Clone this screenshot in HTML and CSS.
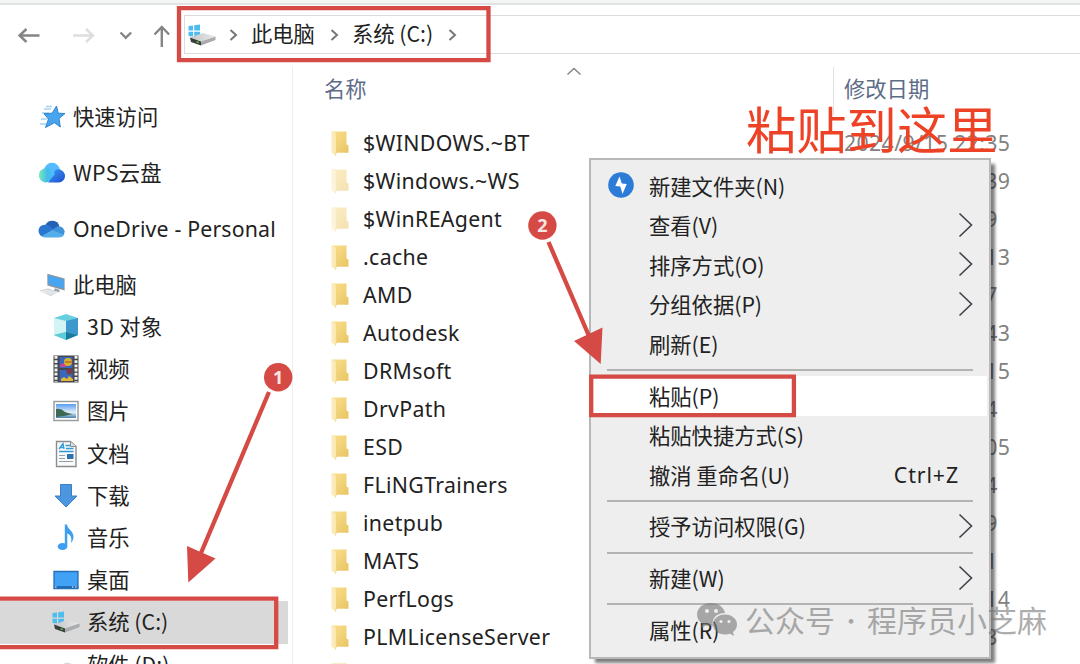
FILE: index.html
```
<!DOCTYPE html>
<html lang="zh-CN">
  <head>
    <meta charset="UTF-8" />
    <meta name="viewport" content="width=device-width, initial-scale=1.0" />
    <title>系统 (C:)</title>
    <link rel="stylesheet" href="styles.css" />
  </head>
  <body>
    <!-- Shared icons -->
    <svg class="defs" width="0" height="0">
      <defs>
        <linearGradient id="gFolder" x1="0" y1="0" x2="1" y2="1">
          <stop offset="0" stop-color="#fae08e" />
          <stop offset="1" stop-color="#e9c564" />
        </linearGradient>
        <linearGradient id="gDrive" x1="0" y1="0" x2="1" y2="0">
          <stop offset="0" stop-color="#c4c6c7" />
          <stop offset="1" stop-color="#e8e9ea" />
        </linearGradient>
        <symbol id="folder" viewBox="0 0 18 26">
          <path d="M1 1.500h14.500v13l2 1v7.200H5L1 21z" fill="url(#gFolder)" />
          <path d="M.5 1l4.800 2.800V22L4.500 25.500.5 22.500z" fill="#fcebb6" />
          <path d="M5.300 3.800V22L4.500 25.500" fill="none" stroke="#edcf7c" stroke-width=".8" />
        </symbol>
        <symbol id="drive" viewBox="0 0 28 22">
          <path d="M.5 2L5 1.500v5H.5zM6.200 1.300L12 .5v6H6.200zM.5 7.700H5v4.800L.5 12zM6.200 7.700H12v5.800l-5.800-.8z" fill="#4dbdf0" />
          <path d="M2 13.500L15 9l12.500 3.500-14 5z" fill="url(#gDrive)" />
          <path d="M2 13.500l11 4v4L3 18z" fill="#3b3d3c" />
          <path d="M13 17.500l14.500-5V16L13 21.500z" fill="#a9abac" />
          <path d="M8.500 17.700l2.500.9" stroke="#5cb947" stroke-width="1.500" />
        </symbol>
        <symbol id="chevron" viewBox="0 0 10 14">
          <path d="M1.500 2l5.500 5-5.500 5" fill="none" stroke="#777" stroke-width="2" />
        </symbol>
        <symbol id="more" viewBox="0 0 16 26">
          <path d="M1.500 1.500L13.500 13 1.500 24.500" fill="none" stroke="#44404a" stroke-width="1.600" />
        </symbol>
      </defs>
    </svg>

    <div class="explorer">
      <div class="ribbon"></div>
      <div class="toolbar">
        <svg width="184" height="38" viewBox="0 0 184 38" fill="none" stroke="#858585" stroke-width="2.400">
          <path d="M39.500 20.500H20M26.500 14l-7 6.500 7 6.500" />
          <path d="M73 20.500h20M86 14l7 6.500-7 6.500" stroke="#dedede" />
          <path d="M120.500 17.500l5.300 5.300 5.300-5.300" />
          <path d="M161.800 32V12.500M154.500 19.500l7.300-7.500 7.300 7.500" />
        </svg>
        <div class="address">
          <svg class="address-drive" width="28" height="22"><use href="#drive" /></svg>
          <svg class="crumb-arrow" width="10" height="14"><use href="#chevron" /></svg>
          <span>此电脑</span>
          <svg class="crumb-arrow" width="10" height="14"><use href="#chevron" /></svg>
          <span>系统 (C:)</span>
          <svg class="crumb-arrow" width="10" height="14"><use href="#chevron" /></svg>
        </div>
      </div>

      <div class="content">
        <div class="sidebar">
          <div class="side-item">
            <svg width="28" height="26" viewBox="0 0 28 26">
              <path d="M6 5h7M4 9h7M3 15h6M2 20h6M8 2.500h6" stroke="#a5d2f4" stroke-width="1.500" />
              <path d="M18.500 2l1.700 7.200 6.800.3-6 5 1.300 8.500-5.800-4.300L7.500 23.500l3-8.500L6 9.700l8.200-.5z" fill="#46a5ee" stroke="#2f83cc" />
            </svg>
            <span>快速访问</span>
          </div>
          <div class="side-item">
            <svg width="28" height="26" viewBox="0 0 28 26">
              <defs>
                <linearGradient id="gWps"><stop offset="0" stop-color="#78ecb7" /><stop offset=".55" stop-color="#43b9ed" /><stop offset="1" stop-color="#51c4ff" /></linearGradient>
                <linearGradient id="gWps2" x1="0" y1="0" x2="1" y2="1"><stop offset="0" stop-color="#3ba0fb" /><stop offset="1" stop-color="#1e4ccb" /></linearGradient>
              </defs>
              <circle cx="14" cy="10.500" r="7.800" fill="#55baff" />
              <path d="M10 22.500h11a6.600 6.600 0 1 0-3.500-12.500z" fill="url(#gWps2)" />
              <path d="M8 22.500a7.200 7.200 0 1 1 4.500-12.900L17 14l-5.500 6.500Q10 22.500 8 22.500z" fill="url(#gWps)" />
            </svg>
            <span class="wps">WPS云盘</span>
          </div>
          <div class="side-item">
            <svg width="30" height="26" viewBox="0 0 30 26">
              <path d="M8 9a8 8 0 0 1 15 1l-8 6z" fill="#2560b5" />
              <path d="M7 21.500A6.300 6.300 0 0 1 7 8.500q3-.5 6 1.500l10 9z" fill="#2b76ce" />
              <path d="M14 15l6-4.500q7-1.500 8.500 5 0 6-6 6z" fill="#3e93da" />
              <path d="M4 20.500L15.500 14l12.500 5.500q-2 2.500-5 2.500H7q-2 0-3-1.500z" fill="#55ade9" />
            </svg>
            <span class="latin">OneDrive - Personal</span>
          </div>
          <div class="side-item last-root">
            <svg width="30" height="26" viewBox="0 0 30 26">
              <path d="M10 1l18.500 5v13L10 13.500z" fill="#8b969f" />
              <path d="M11 2.500L27.500 7v10L11 12z" fill="#47a5f2" />
              <path d="M18 16.500l5 1.500v3l-6-2z" fill="#9ca2a7" />
              <path d="M1 19l10-2.500 10 4-7 4.500z" fill="#d5d9dc" />
              <path d="M4 19.500l12 3.500M7 18.500l12 3" stroke="#f2f4f5" />
            </svg>
            <span>此电脑</span>
          </div>

          <div class="side-item child">
            <svg width="28" height="28" viewBox="0 0 28 28">
              <path d="M14 1l12 4v17l-12 5-12-5V5z" fill="#67cfdf" />
              <path d="M2 5l12 3v11L2 22z" fill="#d3f4f4" />
              <path d="M26 5L14 8v11l12 3z" fill="#3d98ce" />
              <path d="M2 22l12-3v8z" fill="#5ecbd8" /><path d="M26 22l-12-3v8z" fill="#187b9e" />
            </svg>
            <span class="threed">3D 对象</span>
          </div>
          <div class="side-item child">
            <svg width="28" height="28" viewBox="0 0 28 28">
              <path d="M1.500.5h25v27h-25z" fill="#45474b" />
              <path d="M4 1v26M24 1v26" stroke="#f0f0f0" stroke-width="3" stroke-dasharray="2.800 1.400" />
              <path d="M7.500 2h13v11h-13zM7.500 15h13v11h-13z" fill="#3967bb" />
              <path d="M8 10l3-2 3 2v2H8z" fill="#c94692" />
              <circle cx="16" cy="7" r="4" fill="#d8b32b" /><path d="M13 7h7" stroke="#b04631" />
              <circle cx="17.500" cy="16.500" r="3" fill="#793a4b" /><path d="M9 24l3-2 3 2 2-3 4 3v2H9z" fill="#e2b83b" />
            </svg>
            <span>视频</span>
          </div>
          <div class="side-item child">
            <svg width="28" height="22" viewBox="0 0 28 22">
              <defs><linearGradient id="gSky" x2="0" y2="1"><stop stop-color="#579cf0" /><stop offset=".6" stop-color="#e3f0fb" /><stop offset="1" stop-color="#4382b0" /></linearGradient></defs>
              <path d="M2 1.500h24v19H2z" fill="#fff" stroke="#9b9ea1" stroke-width="1.500" />
              <path d="M4 4h20v14H4z" fill="url(#gSky)" />
              <path d="M4 9q5-1 9 3 5 2 8 2l-9 2-8 1z" fill="#3b6953" />
            </svg>
            <span>图片</span>
          </div>
          <div class="side-item child">
            <svg width="28" height="28" viewBox="0 0 28 28">
              <path d="M4.500 1.500h14L24 6.500v20H4.500z" fill="#f9fafb" stroke="#8a8d90" stroke-width="1.400" />
              <path d="M18.500 1.500v5H24" fill="#dde0e2" stroke="#8a8d90" />
              <path d="M7 9l4-5.500L12 9M8.500 7.500h4M13.500 5.500H18M14 8.500h7.500M7 11.500h14.500" fill="none" stroke="#3199d6" stroke-width="1.300" />
              <path d="M7 15.500h6M7 18.500h6M7 21.500h14" stroke="#9b9ea1" stroke-width="1.200" />
              <path d="M15 14h6.500v5H15z" fill="#2f71ae" />
            </svg>
            <span>文档</span>
          </div>
          <div class="side-item child">
            <svg width="28" height="28" viewBox="0 0 28 28">
              <path d="M8.500 2.500h11v11.500H25L14 25 3 14h5.500z" fill="#4b96de" stroke="#3b7fc4" />
            </svg>
            <span>下载</span>
          </div>
          <div class="side-item child">
            <svg width="28" height="28" viewBox="0 0 28 28">
              <ellipse cx="10.500" cy="22.500" rx="4.800" ry="3.600" fill="#3f9ef0" />
              <path d="M12.800.5h2.200c.5 5 7 6.500 6.500 13q0 3-2.500 5.500 1-5.500-1-7.500-1-1.500-2.700-2V22.500h-2.500z" fill="#3f9ef0" />
            </svg>
            <span>音乐</span>
          </div>
          <div class="side-item child">
            <svg width="28" height="22" viewBox="0 0 28 22">
              <path d="M2 2.500h24v17H2z" fill="#40a1f5" stroke="#246fb6" stroke-width="1.300" />
              <path d="M2.500 18h23" stroke="#1b60a8" stroke-width="1.600" /><path d="M3 18h1.500M20 18h1.500M23 18h1.500" stroke="#fff" stroke-width="1.200" />
            </svg>
            <span>桌面</span>
          </div>
          <div class="side-item child selected">
            <svg width="28" height="22"><use href="#drive" /></svg>
            <span>系统 (C:)</span>
          </div>
          <div class="side-item child">
            <svg width="28" height="22" viewBox="0 0 28 22"><path d="M2 13l13-4.500L27 12l-14 5z" fill="#d4d6d7" /><path d="M2 13l11 4v4L3 17.500z" fill="#3b3d3c" /></svg>
            <span>软件 (D:)</span>
          </div>
        </div>

        <div class="files">
          <div class="files-header">
            <span class="col-name">名称</span>
            <svg class="sort" width="16" height="9" viewBox="0 0 16 9"><path d="M1.500 7.500L8 1.500l6.500 6" fill="none" stroke="#858585" stroke-width="1.500" /></svg>
            <span class="col-date">修改日期</span>
          </div>
          <div class="file-row"><svg width="18" height="26"><use href="#folder" /></svg><span class="file-name">$WINDOWS.~BT</span><span class="file-date">2024/9/15 22:35</span></div>
          <div class="file-row"><svg class="hidden-folder" width="18" height="26"><use href="#folder" /></svg><span class="file-name">$Windows.~WS</span><span class="file-date">2024/9/15 22:39</span></div>
          <div class="file-row"><svg class="hidden-folder" width="18" height="26"><use href="#folder" /></svg><span class="file-name">$WinREAgent</span><span class="file-date">2024/9/15 9:29</span></div>
          <div class="file-row"><svg width="18" height="26"><use href="#folder" /></svg><span class="file-name">.cache</span><span class="file-date">2024/3/12 17:13</span></div>
          <div class="file-row"><svg width="18" height="26"><use href="#folder" /></svg><span class="file-name">AMD</span><span class="file-date">2023/9/28 9:57</span></div>
          <div class="file-row"><svg width="18" height="26"><use href="#folder" /></svg><span class="file-name">Autodesk</span><span class="file-date">2024/5/16 15:43</span></div>
          <div class="file-row"><svg width="18" height="26"><use href="#folder" /></svg><span class="file-name">DRMsoft</span><span class="file-date">2024/8/20 10:15</span></div>
          <div class="file-row"><svg width="18" height="26"><use href="#folder" /></svg><span class="file-name">DrvPath</span><span class="file-date">2023/9/28 9:44</span></div>
          <div class="file-row"><svg width="18" height="26"><use href="#folder" /></svg><span class="file-name">ESD</span><span class="file-date">2024/9/15 20:05</span></div>
          <div class="file-row"><svg width="18" height="26"><use href="#folder" /></svg><span class="file-name">FLiNGTrainers</span><span class="file-date">2024/2/11 9:34</span></div>
          <div class="file-row"><svg width="18" height="26"><use href="#folder" /></svg><span class="file-name">inetpub</span><span class="file-date">2024/7/18 8:59</span></div>
          <div class="file-row"><svg width="18" height="26"><use href="#folder" /></svg><span class="file-name">MATS</span><span class="file-date">2024/6/22 9:11</span></div>
          <div class="file-row"><svg width="18" height="26"><use href="#folder" /></svg><span class="file-name">PerfLogs</span><span class="file-date">2022/5/17 13:14</span></div>
          <div class="file-row"><svg width="18" height="26"><use href="#folder" /></svg><span class="file-name">PLMLicenseServer</span><span class="file-date">2024/5/16 9:23</span></div>
          <div class="file-row"><svg width="18" height="26"><use href="#folder" /></svg></div>
        </div>
      </div>
    </div>

    <!-- Context menu -->
    <div class="menu">
      <div class="menu-item">
        <svg class="menu-icon" width="26" height="26" viewBox="0 0 26 26"><circle cx="13" cy="13" r="12.800" fill="#2b7bd7" /><path d="M11.500 4.500L7.300 14l5 .5L14.500 22 18.800 12l-5-.5z" fill="#fff" /></svg>
        <span>新建文件夹(N)</span>
      </div>
      <div class="menu-item"><span>查看(V)</span><svg class="more" width="16" height="26"><use href="#more" /></svg></div>
      <div class="menu-item"><span>排序方式(O)</span><svg class="more" width="16" height="26"><use href="#more" /></svg></div>
      <div class="menu-item"><span>分组依据(P)</span><svg class="more" width="16" height="26"><use href="#more" /></svg></div>
      <div class="menu-item"><span>刷新(E)</span></div>
      <div class="menu-sep"></div>
      <div class="menu-item active"><span>粘贴(P)</span></div>
      <div class="menu-item"><span>粘贴快捷方式(S)</span></div>
      <div class="menu-item"><span>撤消 重命名(U)</span><span class="shortcut">Ctrl+Z</span></div>
      <div class="menu-sep"></div>
      <div class="menu-item"><span>授予访问权限(G)</span><svg class="more" width="16" height="26"><use href="#more" /></svg></div>
      <div class="menu-sep"></div>
      <div class="menu-item"><span>新建(W)</span><svg class="more" width="16" height="26"><use href="#more" /></svg></div>
      <div class="menu-sep"></div>
      <div class="menu-item"><span>属性(R)</span></div>
    </div>

    <!-- Annotations -->
    <svg class="marks" width="1080" height="664" viewBox="0 0 1080 664">
      <g fill="none" stroke="#d64a45" stroke-width="4.300">
        <path d="M179 8.200h309.500v52H179z" />
        <path d="M-4 598.700h280.200v48.400H-4z" />
        <path d="M591.200 376.600h202.700v38.600H591.200z" />
        <path d="M269 392L201 553M548.500 242L589 336" />
      </g>
      <g fill="#d64a45">
        <circle cx="278.200" cy="377.300" r="14.200" />
        <circle cx="542.400" cy="225.500" r="14.200" />
        <path d="M187 546l28.500 12.500L188.300 582.500zM574 341l28.500-13.500L600.700 364z" />
      </g>
      <text class="mark-number" x="278.200" y="383.500">1</text>
      <text class="mark-number" x="542.400" y="231.500">2</text>
    </svg>
    <div class="paste-here">粘贴到这里</div>

    <div class="watermark">
      <svg width="42" height="36" viewBox="0 0 42 36">
        <path d="M15 1C7 1 1 6 1 12.500c0 4 2 7 5 9L5 26l5-2.500q3 1 7 .8C15 16 21 11 29 11 28 5 22 1 15 1z" />
        <path d="M29 12.500c-7 0-12 4.500-12 10s5 10 12 10q3 0 5-.8l4 2.300-1-4c2.500-2 4-4.500 4-7.500 0-5.500-5-10-12-10z" />
        <g fill="#eee"><circle cx="11" cy="9" r="2" /><circle cx="20" cy="9" r="2" /><circle cx="25" cy="19.500" r="1.600" /><circle cx="33" cy="19.500" r="1.600" /></g>
      </svg>
      <span>公众号</span><span class="wm-dot">·</span><span>程序员小芝麻</span>
    </div>
  </body>
</html>
```
FILE: styles.css
```
* {
  padding: 0;
  margin: 0;
  box-sizing: border-box;
}

body {
  width: 1080px;
  height: 664px;
  overflow: hidden;
  position: relative;
  background: #fff;
  color: #222;
  font-family: "Noto Sans CJK SC", sans-serif;
  font-size: 21.3px;
  line-height: 30px;
  white-space: nowrap;
}

svg {
  display: block;
  flex-shrink: 0;
}

.defs {
  position: absolute;
}

.explorer {
  height: 664px;
  overflow: hidden;
}

.ribbon {
  height: 5px;
  background: #f4f6f6;
  border-bottom: 2px solid #e1e3e3;
}

/* Toolbar */
.toolbar {
  display: flex;
  height: 62px;
  padding-top: 10px;
}

.address {
  display: flex;
  align-items: center;
  flex: 1;
  height: 39px;
  border: 1.5px solid #dcdcdc;
  border-right: none;
  padding-left: 3px;
}

.address-drive {
  margin-right: 13px;
}

.crumb-arrow {
  margin-right: 12px;
}

.address span {
  margin-right: 15px;
  padding-bottom: 3px;
}

.content {
  display: flex;
  height: 597px;
}

/* Sidebar */
.sidebar {
  width: 293px;
  flex-shrink: 0;
  padding-top: 22px;
  border-right: 1px solid #eee;
}

.side-item {
  display: flex;
  align-items: center;
  height: 56px;
  padding-left: 38px;
}

.side-item svg {
  width: 28px;
  margin-right: 7px;
}

.side-item span {
  padding-bottom: 2px;
}

.side-item.last-root {
  margin-bottom: -7px;
}

.side-item.child {
  height: 42.2px;
  margin-right: 4px;
  padding-left: 52px;
}

.side-item.selected {
  background: #d9d9d9;
}

.side-item span.latin {
  padding-bottom: 0;
  letter-spacing: 0.16px;
}

.wps,
.threed {
  letter-spacing: 0.35px;
}

.latin,
.file-row,
.shortcut {
  font-family: "Noto Sans", sans-serif;
}

/* File list */
.files {
  flex: 1;
}

.files-header {
  display: flex;
  height: 57px;
  color: #5d6c87;
}

.col-name {
  width: 242px;
  padding: 6px 0 0 31px;
}

.sort {
  margin-left: 31px;
}

.col-date {
  height: 48px;
  margin-left: 251px;
  padding: 6px 0 0 10px;
  border-left: 1px solid #e2e2e2;
}

.file-row {
  display: flex;
  align-items: center;
  height: 38px;
  padding-left: 38px;
}

.file-row svg {
  margin-right: 14px;
}

.hidden-folder {
  opacity: 0.5;
}

.file-name {
  width: 481px;
  letter-spacing: 0.35px;
}

.file-date {
  color: #828282;
  font-size: 21.3px;
  letter-spacing: 0.35px;
}

/* Context menu */
.menu {
  position: absolute;
  left: 589px;
  top: 158px;
  width: 402px;
  height: 501px;
  padding-top: 6.5px;
  background: #eee;
  border: 2px solid #b8b8b8;
  box-shadow: 5px 5px 3px -1px rgba(0, 0, 0, 0.5);
}

.menu-item {
  display: flex;
  align-items: center;
  height: 39.5px;
  margin-right: 2px;
  padding: 0 13px 0 58px;
}

.menu-item span {
  padding-bottom: 1px;
}

.menu-item.active {
  background: #fff;
}

.menu-icon {
  margin: 0 15px 0 -41px;
}

.more {
  margin-left: auto;
}

.more,
.menu-icon {
  position: relative;
  top: -1px;
}

.shortcut {
  margin-left: auto;
  margin-right: 15px;
  letter-spacing: 0.9px;
}

.menu-sep {
  height: 2px;
  margin: 5px 16px 5.3px;
  background: #b3b3b3;
}

/* Annotations */
.marks {
  position: absolute;
  left: 0;
  top: 0;
}

.mark-number {
  fill: #f9e5e4;
  font-family: "Noto Sans", sans-serif;
  font-size: 18px;
  font-weight: bold;
  text-anchor: middle;
}

.paste-here {
  position: absolute;
  left: 746px;
  top: 92px;
  color: #ee4227;
  font-size: 50.3px;
  line-height: 70px;
}

.watermark {
  position: absolute;
  left: 696px;
  top: 602px;
  display: flex;
  color: #777;
  font-size: 30px;
  line-height: 34px;
  opacity: 0.6;
}

.watermark svg {
  fill: #777;
  margin-right: 7px;
}

.wm-dot {
  width: 32px;
  font-size: 22px;
  text-align: center;
}
```
